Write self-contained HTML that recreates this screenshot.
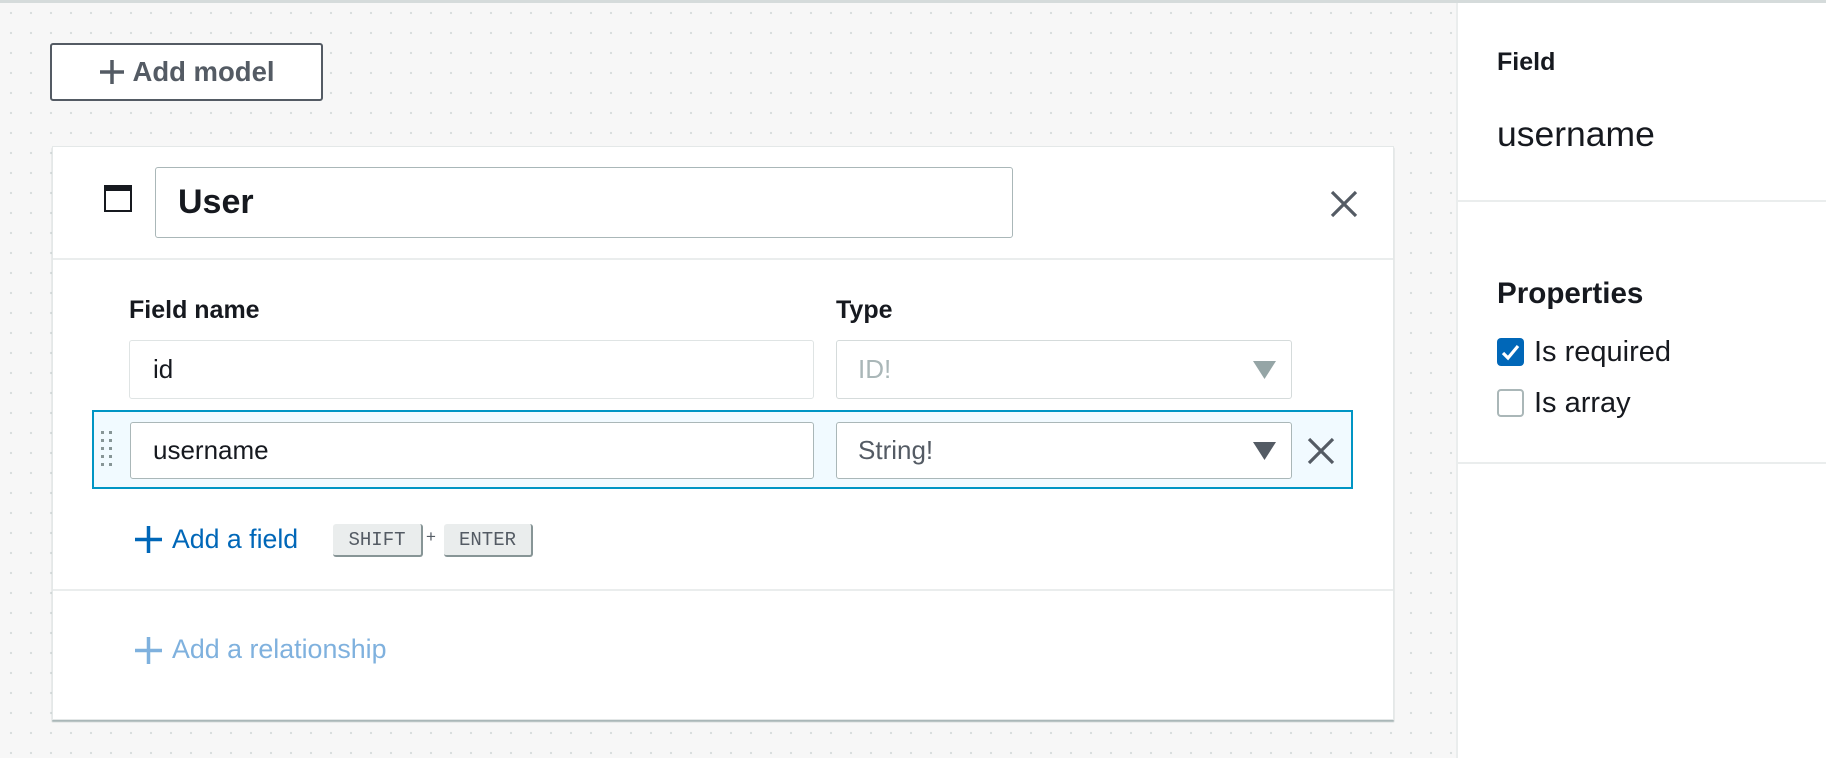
<!DOCTYPE html>
<html><head><meta charset="utf-8"><style>
*{box-sizing:border-box;margin:0;padding:0}
body{width:1826px;height:758px;overflow:hidden;position:relative;font-family:"Liberation Sans",sans-serif;color:#16191f;
background-color:#f7f7f7;background-image:radial-gradient(circle,#d9dede 1.1px,transparent 1.3px);background-size:20px 20px;background-position:1px 3px}
.a{position:absolute}
.top{left:0;top:0;width:1826px;height:3px;background:#d5dbdb}
.btn{left:50px;top:43px;width:273px;height:58px;border:2px solid #545b64;border-radius:3px;background:#fff;color:#545b64;font-weight:bold;font-size:27.5px;display:flex;align-items:center;justify-content:center;gap:6px}
.card{left:52px;top:146px;width:1342px;height:574px;background:#fff;border:1px solid #e4e8e8;box-shadow:0 2px 1px #aab7b8}
.panel{left:1456px;top:3px;width:370px;height:755px;background:#fff;border-left:2px solid #eaeded}
.inp{border:1px solid #aab7b8;border-radius:3px;background:#fff;display:flex;align-items:center}
.hr{height:2px;background:#eaeded}
.kbd{background:#eaeded;border-radius:3px;border-right:2px solid #879596;border-bottom:2px solid #879596;font-family:"Liberation Mono",monospace;font-size:19px;color:#545b64;display:flex;align-items:center;justify-content:center}
</style></head><body>
<div class="a top"></div>
<div class="a btn"><svg width="28" height="28" viewBox="0 0 28 28"><path d="M14 2V26M2 14H26" stroke="#545b64" stroke-width="3.5"/></svg>Add model</div>

<div class="a card"></div>
<svg class="a" style="left:104px;top:185px" width="28" height="27" viewBox="0 0 28 27"><rect x="1" y="1" width="26" height="25" fill="none" stroke="#16191f" stroke-width="2"/><rect x="0" y="0" width="28" height="6" fill="#16191f"/></svg>
<div class="a inp" style="left:155px;top:167px;width:858px;height:71px;padding-left:22px;font-weight:bold;font-size:34px">User</div>
<svg class="a" style="left:1330px;top:190px" width="28" height="28" viewBox="0 0 28 28"><path d="M2 2L26 26M26 2L2 26" stroke="#545b64" stroke-width="3.2"/></svg>
<div class="a hr" style="left:53px;top:258px;width:1340px"></div>

<div class="a" style="left:129px;top:296px;font-weight:bold;font-size:25px">Field name</div>
<div class="a" style="left:836px;top:296px;font-weight:bold;font-size:25px">Type</div>
<div class="a inp" style="left:129px;top:340px;width:685px;height:59px;border-color:#dfe4e4;padding-left:23px;font-size:26px">id</div>
<div class="a inp" style="left:836px;top:340px;width:456px;height:59px;border-color:#d5dbdb;padding-left:21px;font-size:26px;color:#aab7b8">ID!</div>
<svg class="a" style="left:1253px;top:361px" width="23" height="18" viewBox="0 0 23 18"><path d="M0 0H23L11.5 18Z" fill="#95a5a6"/></svg>

<div class="a" style="left:92px;top:410px;width:1261px;height:79px;background:#f1faff;border:2px solid #0095c4"></div>
<svg class="a" style="left:101px;top:431px" width="12" height="36" viewBox="0 0 12 36"><g fill="#879596"><rect x="0" y="0" width="3" height="3"/><rect x="8" y="0" width="3" height="3"/><rect x="0" y="8" width="3" height="3"/><rect x="8" y="8" width="3" height="3"/><rect x="0" y="16" width="3" height="3"/><rect x="8" y="16" width="3" height="3"/><rect x="0" y="24" width="3" height="3"/><rect x="8" y="24" width="3" height="3"/><rect x="0" y="32" width="3" height="3"/><rect x="8" y="32" width="3" height="3"/></g></svg>
<div class="a inp" style="left:130px;top:422px;width:684px;height:57px;padding-left:22px;font-size:26px">username</div>
<div class="a inp" style="left:836px;top:422px;width:456px;height:57px;padding-left:21px;font-size:26px;color:#545b64">String!</div>
<svg class="a" style="left:1253px;top:442px" width="23" height="18" viewBox="0 0 23 18"><path d="M0 0H23L11.5 18Z" fill="#545b64"/></svg>
<svg class="a" style="left:1307px;top:437px" width="28" height="28" viewBox="0 0 28 28"><path d="M2 2L26 26M26 2L2 26" stroke="#545b64" stroke-width="3.2"/></svg>

<svg class="a" style="left:135px;top:526px" width="27" height="27" viewBox="0 0 27 27"><path d="M13.5 0V27M0 13.5H27" stroke="#0067b8" stroke-width="3.5"/></svg>
<div class="a" style="left:172px;top:524px;font-size:26.7px;color:#0067b8">Add a field</div>
<div class="a kbd" style="left:333px;top:524px;width:90px;height:33px">SHIFT</div>
<div class="a" style="left:426px;top:527px;font-size:17px;color:#545b64">+</div>
<div class="a kbd" style="left:444px;top:524px;width:89px;height:33px">ENTER</div>
<div class="a hr" style="left:53px;top:589px;width:1340px"></div>

<svg class="a" style="left:135px;top:637px" width="27" height="27" viewBox="0 0 27 27"><path d="M13.5 0V27M0 13.5H27" stroke="#7fb1de" stroke-width="3.5"/></svg>
<div class="a" style="left:172px;top:634px;font-size:26.8px;color:#7fb1de">Add a relationship</div>

<div class="a panel"></div>
<div class="a" style="left:1497px;top:48px;font-weight:bold;font-size:25px">Field</div>
<div class="a" style="left:1497px;top:114px;font-size:35.5px">username</div>
<div class="a hr" style="left:1458px;top:200px;width:368px"></div>
<div class="a" style="left:1497px;top:277px;font-weight:bold;font-size:29.6px">Properties</div>
<div class="a" style="left:1497px;top:338px;width:27px;height:28px;background:#0067b8;border-radius:4px"></div>
<svg class="a" style="left:1497px;top:338px" width="27" height="28" viewBox="0 0 27 28"><path d="M6 15L11 20L21 8" fill="none" stroke="#fff" stroke-width="3.2"/></svg>
<div class="a" style="left:1534px;top:336px;font-size:29px">Is required</div>
<div class="a" style="left:1497px;top:389px;width:27px;height:28px;border:2px solid #aab7b8;border-radius:4px;background:#fff"></div>
<div class="a" style="left:1534px;top:387px;font-size:29px">Is array</div>
<div class="a hr" style="left:1458px;top:462px;width:368px"></div>
</body></html>
